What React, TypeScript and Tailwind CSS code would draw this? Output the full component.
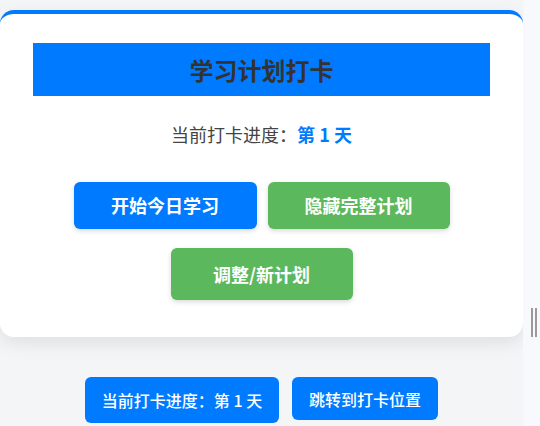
const font = { fontFamily: '"Noto Sans CJK SC", "Noto Sans", sans-serif' };

function Btn({
  label,
  tone,
  className,
}: {
  label: string;
  tone: "blue" | "green";
  className: string;
}) {
  return (
    <button
      className={
        "flex items-center justify-center rounded-md font-bold text-white text-[18px] shadow-[0_2px_5px_rgba(0,0,0,0.15)] " +
        (tone === "blue" ? "bg-[#007bff] " : "bg-[#5cb85c] ") +
        className
      }
    >
      {label}
    </button>
  );
}

export default function App() {
  return (
    <div className="flex h-[426px] w-[540px] overflow-hidden bg-[#f4f5f7]" style={font}>
      <div className="w-[523px] shrink-0">
        <div className="mt-[10px] rounded-[14px] border-t-4 border-[#007bff] bg-white px-[33px] pb-[37px] pt-[29px] shadow-[0_6px_18px_rgba(0,0,0,0.09)]">
          <div className="flex h-[53px] items-center justify-center bg-[#007bff]">
            <h1 className="text-[24px] font-bold text-[#333]">学习计划打卡</h1>
          </div>
          <p className="mt-[25px] text-center text-[18px] leading-[27px] text-[#444]">
            当前打卡进度：<span className="font-bold text-[#007bff]">第 1 天</span>
          </p>
          <div className="mt-[34px] flex justify-center gap-[11px]">
            <Btn label="开始今日学习" tone="blue" className="h-[47px] w-[183px]" />
            <Btn label="隐藏完整计划" tone="green" className="h-[47px] w-[182px]" />
          </div>
          <div className="mt-[19px] flex justify-center">
            <Btn label="调整/新计划" tone="green" className="h-[52px] w-[182px]" />
          </div>
        </div>
        <div className="mt-[40px] flex items-start justify-center gap-[13px]">
          <button className="h-[46px] w-[194px] rounded-md bg-[#007bff] text-[16px] font-medium text-white">
            当前打卡进度：第 1 天
          </button>
          <button className="h-[43px] w-[146px] rounded-md bg-[#007bff] text-[16px] font-medium text-white">
            跳转到打卡位置
          </button>
        </div>
      </div>
      <div className="flex-1 bg-[#f8f9fc] pl-[8px] pt-[308px]">
        <div className="flex gap-[2px]">
          <div className="h-[29px] w-[2px] bg-[#9a9a9a]" />
          <div className="h-[29px] w-[2px] bg-[#9a9a9a]" />
        </div>
      </div>
    </div>
  );
}
